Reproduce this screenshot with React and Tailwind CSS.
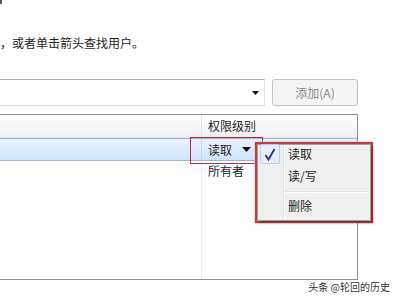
export default function App() {
  const font = { fontFamily: '"Noto Sans CJK SC", "Noto Sans", sans-serif' };
  return (
    <div
      className="relative w-[400px] h-[300px] overflow-hidden bg-white text-[12px] text-[#1e1e1e]"
      style={font}
    >
      {/* tiny mark top-left */}
      <div className="absolute left-0 top-0 w-[2px] h-[4px] bg-[#4a5a6a]" />

      <div className="pt-[35px] h-[51px] leading-[16px] whitespace-nowrap">
        ，或者单击箭头查找用户。
      </div>

      {/* combobox + button row */}
      <div className="mt-[28px] flex items-stretch h-[27px]">
        <div className="ml-[-2px] w-[267px] border border-[#dde2e8] border-t-[#abadb3] bg-white flex items-center justify-end pr-[4px]">
          <svg width="7" height="4" viewBox="0 0 7 4" className="mr-[1px]">
            <path d="M0 0 H7 L3.5 4 Z" fill="#111" />
          </svg>
        </div>
        <div className="ml-[7px] w-[86px] rounded-[3px] border border-[#c2c5c8] bg-[#f4f4f4] flex items-center justify-center text-[#8a8a8a] leading-none">
          添加(A)
        </div>
      </div>

      {/* list */}
      <div className="mt-[8px] ml-[-2px] w-[360px] h-[166px] border border-[#8b8f96] flex flex-col">
        <div className="h-[23px] flex bg-gradient-to-b from-[#ffffff] to-[#eef0f2] border-b border-[#e4e6e8]">
          <div className="w-[203px] border-r border-[#e2e3e6]" />
          <div className="pl-[6px] flex items-center leading-none">权限级别</div>
        </div>
        <div className="h-[23px] flex bg-gradient-to-b from-[#e9f3fe] to-[#cfe3fb] border-y border-[#a3b4c8]">
          <div className="w-[203px] border-r border-[#c9d6e4]" />
          <div className="pl-[6px] flex items-center leading-none">
            <span>读取</span>
            <svg width="9" height="5" viewBox="0 0 9 5" className="ml-[10px]">
              <path d="M0 0 H9 L4.5 5 Z" fill="#111" />
            </svg>
          </div>
        </div>
        <div className="flex flex-1">
          <div className="w-[203px] border-r border-[#eceef0]" />
          <div className="pl-[6px] pt-[4px] leading-none">所有者</div>
        </div>
      </div>

      {/* red annotation around in-place combo */}
      <div className="absolute left-[190px] top-[137px] w-[73px] h-[27px] border-[1.5px] border-[#b8323c]" />

      {/* context menu */}
      <div className="absolute left-[255px] top-[142px] w-[118px] h-[81px] border-2 border-[#c63a42] shadow-[0_0_2px_#f2a0a6]">
        <div className="relative w-full h-full bg-[#f0f0f0] border border-[#a0a0a0] shadow-[2px_2px_2px_rgba(0,0,0,0.3)]">
          {/* gutter lines */}
          <div className="absolute left-[25px] top-0 bottom-0 w-[1px] bg-[#e2e3e3]" />
          <div className="absolute left-[26px] top-0 bottom-0 w-[1px] bg-white" />
          {/* check box */}
          <div className="absolute left-[2px] top-[-1px] w-[20px] h-[20px] bg-[#e5eef9] border border-[#aecff7] rounded-[2px] flex items-center justify-center">
            <svg width="12" height="13" viewBox="0 0 12 13">
              <path d="M1.5 7 L4.5 11.5 L10.5 1" stroke="#3a3a8a" strokeWidth="2" fill="none" />
            </svg>
          </div>
          <div className="flex flex-col pl-[30px] leading-none">
            <div className="h-[18px] flex items-center">读取</div>
            <div className="h-[26px] flex items-center">读/写</div>
            <div className="ml-[-3px] mr-[2px] mt-[2px] mb-[3px] h-[2px] border-t border-[#e0e0e0] border-b-white border-b" />
            <div className="h-[20px] flex items-center">删除</div>
          </div>
        </div>
      </div>

      {/* watermark */}
      <div className="absolute right-[10px] top-[280px] text-[10px] leading-[14px] text-[#333] whitespace-nowrap">
        头条 @轮回的历史
      </div>
    </div>
  );
}
